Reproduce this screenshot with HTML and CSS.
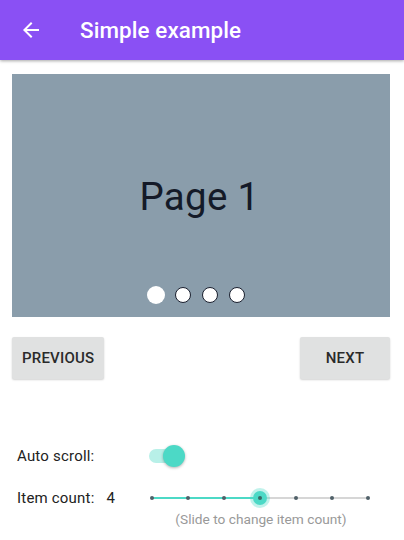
FILE: index.html
```html
<!DOCTYPE html>
<html>
<head>
<meta charset="utf-8">
<link rel="stylesheet" href="styles.css">
</head>
<body>
<header class="appbar">
  <svg class="back" width="24" height="24" viewBox="0 0 24 24"><path d="M20 11H7.83l5.59-5.59L12 4l-8 8 8 8 1.41-1.41L7.83 13H20v-2z" fill="#fff"/></svg>
  <h1 class="title">Simple example</h1>
</header>
<main class="content">
  <section class="carousel">
    <div class="page">Page 1</div>
    <div class="dots">
      <span class="dot active"></span>
      <span class="dot"></span>
      <span class="dot"></span>
      <span class="dot"></span>
    </div>
  </section>
  <div class="buttons">
    <button class="btn">PREVIOUS</button>
    <button class="btn next">NEXT</button>
  </div>
  <div class="settings">
    <div class="row">
      <span class="label">Auto scroll:</span>
      <span class="switch"><span class="track"></span><span class="thumb"></span></span>
    </div>
    <div class="row count">
      <span class="label">Item count:</span>
      <span class="value">4</span>
      <div class="slider-wrap">
        <div class="slider">
          <div class="rail"></div>
          <div class="fill"></div>
          <span class="tick" style="left:0px"></span>
          <span class="tick" style="left:36px"></span>
          <span class="tick" style="left:72px"></span>
          <span class="tick" style="left:144px"></span>
          <span class="tick" style="left:180px"></span>
          <span class="tick" style="left:216px"></span>
          <span class="knob" style="left:108px"></span>
        </div>
        <div class="hint">(Slide to change item count)</div>
      </div>
    </div>
  </div>
</main>
</body>
</html>
```
FILE: styles.css
```css
html, body { margin: 0; padding: 0; background: #fff; }
body { width: 404px; height: 540px; overflow: hidden; font-family: Roboto, "Noto Sans", sans-serif; }
.appbar {
  height: 60px; background: #8a50f4; display: flex; align-items: center;
  box-shadow: 0 1px 3px rgba(0,0,0,0.35);
  position: relative; z-index: 1;
}
.back { margin-left: 19px; margin-top: -1px; }
.title { margin: 0 0 0 37px; color: #fff; font-size: 22.4px; font-weight: 500; letter-spacing: 0.1px; }
.content { padding: 14px 14px 0 12px; }
.carousel {
  height: 243px; background: #8a9dab; position: relative;
  display: flex; align-items: center; justify-content: center;
}
.page { font-size: 38.5px; color: #141a28; margin-top: 2px; margin-right: 3px; letter-spacing: 0.3px; }
.dots { position: absolute; bottom: 13px; left: 0; right: 0; display: flex; justify-content: center; align-items: center; gap: 11px; padding-right: 10px; }
.dot { width: 16px; height: 16px; border-radius: 50%; background: #fff; border: 1.5px solid #1a1f2e; box-sizing: border-box; }
.dot.active { width: 18px; height: 18px; border: none; margin: 0 -1px; }
.buttons { display: flex; justify-content: space-between; margin-top: 20px; }
.btn {
  height: 42px; border: none; border-radius: 2px; background: #e0e1e1;
  font-family: Roboto, sans-serif; font-size: 15px; font-weight: 500; color: #2a2a2a;
  box-shadow: 0 1px 2px rgba(0,0,0,0.18);
  padding: 0 10px; width: 92px; letter-spacing: 0.2px;
}
.btn.next { width: 90px; }
.settings { margin-top: 63px; padding-left: 5px; }
.row { display: flex; align-items: center; height: 28px; }
.label { font-size: 15px; color: #222; letter-spacing: 0.2px; }
.switch { position: relative; width: 40px; height: 22px; margin-left: 55px; }
.track { position: absolute; left: 0; top: 4px; width: 32px; height: 14px; border-radius: 7px; background: #b8f0e8; }
.thumb { position: absolute; left: 14px; top: 0; width: 22px; height: 22px; border-radius: 50%; background: #4cd9c6; box-shadow: 0 1px 3px rgba(0,0,0,0.3); }
.count { margin-top: 18px; align-items: flex-start; height: auto; }
.count .label, .count .value { line-height: 20px; }
.value { font-size: 15px; color: #222; margin-left: 12px; }
.slider-wrap { margin-left: 37px; width: 216px; padding-top: 10px; }
.slider { position: relative; height: 0; }
.rail { position: absolute; left: 0; width: 216px; top: -1px; height: 2px; background: #d6d6d6; }
.fill { position: absolute; left: 0; width: 108px; top: -1px; height: 2px; background: #4cd9c6; }
.tick { position: absolute; top: -2px; width: 4px; height: 4px; margin-left: -2px; border-radius: 50%; background: #506068; }
.knob { position: absolute; top: -7px; width: 14px; height: 14px; margin-left: -7px; border-radius: 50%; background: #4cd9c6; box-shadow: 0 0 0 3px rgba(76,217,198,0.35); }
.knob::after { content: ""; position: absolute; left: 5px; top: 5px; width: 4px; height: 4px; border-radius: 50%; background: #3a6a66; }
.hint { margin-top: 13px; text-align: center; font-size: 13.7px; color: #999; margin-left: 2px; }
```
